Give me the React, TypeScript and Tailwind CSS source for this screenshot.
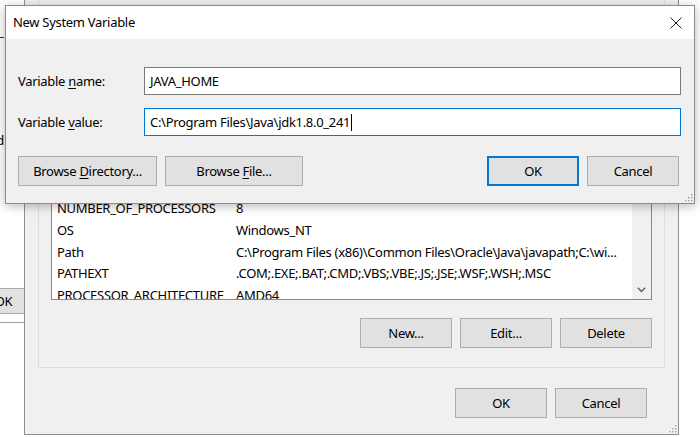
import React from "react";

function Btn({
  children,
  w,
  focused = false,
}: {
  children: React.ReactNode;
  w: string;
  focused?: boolean;
}) {
  return (
    <div
      className={
        "h-[30px] flex items-center justify-center bg-[#e1e1e1] " +
        w +
        (focused ? " border-2 border-[#0078d7]" : " border border-[#adadad]")
      }
    >
      {children}
    </div>
  );
}

function Grip() {
  return (
    <svg width="10" height="10" viewBox="0 0 10 10" className="absolute right-[1px] bottom-[1px]">
      {[
        [8, 2],
        [5, 5],
        [8, 5],
        [2, 8],
        [5, 8],
        [8, 8],
      ].map(([x, y]) => (
        <rect key={`${x}-${y}`} x={x} y={y} width="1.4" height="1.4" fill="#a0a0a0" />
      ))}
    </svg>
  );
}

const rows: [string, string][] = [
  ["asl.log", "Destination=file"],
  ["ComSpec", "C:\\WINDOWS\\system32\\cmd.exe"],
  ["DriverData", "C:\\Windows\\System32\\Drivers\\DriverData"],
  ["NUMBER_OF_PROCESSORS", "8"],
  ["OS", "Windows_NT"],
  ["Path", "C:\\Program Files (x86)\\Common Files\\Oracle\\Java\\javapath;C:\\wi..."],
  ["PATHEXT", ".COM;.EXE;.BAT;.CMD;.VBS;.VBE;.JS;.JSE;.WSF;.WSH;.MSC"],
  ["PROCESSOR_ARCHITECTURE", "AMD64"],
  ["PROCESSOR_IDENTIFIER", "Intel64 Family 6 Model 142 Stepping 10, GenuineIntel"],
];

export default function App() {
  return (
    <div className="relative w-[700px] h-[437px] overflow-hidden bg-white text-black font-['Noto_Sans',sans-serif] text-[13px] tracking-[-0.3px] leading-none">
      {/* Far-left background window */}
      <div className="absolute left-[-300px] top-[-10px] w-[400px] h-[333px] bg-white border border-[#a0a0a0] flex flex-col">
        <div className="flex justify-end pr-[95px] pt-[46px]">
          <div className="w-[4px] h-px bg-[#333]" />
        </div>
        <div className="flex justify-end pr-[95px] pt-[96px]">
          <span>Add</span>
        </div>
        <div className="flex-1" />
        <div className="flex justify-end pr-[58px] pb-[8px]">
          <div className="w-[75px] h-[26px] bg-[#e1e1e1] border border-[#adadad] flex items-center justify-center">
            OK
          </div>
        </div>
      </div>

      {/* Environment Variables window */}
      <div className="absolute left-[24px] top-[-200px] w-[655px] h-[635px] bg-[#f0f0f0] border border-[#8f8f8f] flex flex-col px-[13px] pb-[16px]">
        <div className="flex-1 border border-[#dcdcdc] flex flex-col justify-end px-[12px] pb-[19px]">
          <div className="h-[188px] border border-[#828790] bg-white flex overflow-hidden">
            <div className="flex-1 flex flex-col overflow-hidden">
              <div className="h-[20px] shrink-0 flex items-center border-b border-[#e5e5e5]">
                <span className="w-[184px] pl-[5px]">Variable</span>
                <span>Value</span>
              </div>
              {rows.map(([k, v]) => (
                <div key={k} className="h-[21.67px] shrink-0 flex items-center whitespace-nowrap">
                  <span className="w-[184px] shrink-0 pl-[5px]">{k}</span>
                  <span>{v}</span>
                </div>
              ))}
            </div>
            <div className="w-[19px] shrink-0 bg-[#f0f0f0] flex flex-col justify-end items-center pb-[6px]">
              <svg width="9" height="6" viewBox="0 0 9 6">
                <path d="M0.8 0.8 L4.5 4.5 L8.2 0.8" fill="none" stroke="#606060" strokeWidth="1.5" />
              </svg>
            </div>
          </div>
          <div className="mt-[18px] flex justify-end gap-[8px]">
            <Btn w="w-[92px]">New...</Btn>
            <Btn w="w-[92px]">Edit...</Btn>
            <Btn w="w-[92px]">Delete</Btn>
          </div>
        </div>
        <div className="mt-[20px] flex justify-end gap-[8px] pr-[18px]">
          <Btn w="w-[92px]">OK</Btn>
          <Btn w="w-[92px]">Cancel</Btn>
        </div>
        <Grip />
      </div>

      {/* New System Variable dialog */}
      <div className="absolute left-[5px] top-[5px] w-[690px] h-[199px] bg-[#f0f0f0] border border-[#8a8a8a] flex flex-col shadow-[0_2px_10px_rgba(0,0,0,0.28)]">
        <div className="h-[33px] shrink-0 bg-white flex items-center justify-between pl-[7px] pr-[12px]">
          <span>New System Variable</span>
          <svg width="12" height="12" viewBox="0 0 12 12">
            <path d="M0.5 0.5 L11.5 11.5 M11.5 0.5 L0.5 11.5" stroke="#202020" strokeWidth="1" />
          </svg>
        </div>
        <div className="flex flex-col pl-[12px] pr-[13px] pt-[28px]">
          <div className="flex items-center">
            <span className="w-[126px] shrink-0">
              Variable <span className="underline underline-offset-2">n</span>ame:
            </span>
            <div className="flex-1 h-[28px] bg-white border border-[#7a7a7a] flex items-center pl-[5px]">
              JAVA_HOME
            </div>
          </div>
          <div className="flex items-center mt-[13px]">
            <span className="w-[126px] shrink-0">
              Variable <span className="underline underline-offset-2">v</span>alue:
            </span>
            <div className="flex-1 h-[28px] bg-white border border-[#0078d7] flex items-center pl-[5px]">
              <span>C:\Program Files\Java\jdk1.8.0_241</span>
              <span className="w-px h-[17px] bg-black ml-[1px]" />
            </div>
          </div>
          <div className="flex items-center mt-[20px] pr-[2px]">
            <Btn w="w-[139px]">
              <span>
                Browse <span className="underline underline-offset-2">D</span>irectory...
              </span>
            </Btn>
            <div className="ml-[8px]">
              <Btn w="w-[138px]">
                <span>
                  Browse <span className="underline underline-offset-2">F</span>ile...
                </span>
              </Btn>
            </div>
            <div className="flex-1" />
            <Btn w="w-[92px]" focused>
              OK
            </Btn>
            <div className="ml-[8px]">
              <Btn w="w-[92px]">Cancel</Btn>
            </div>
          </div>
        </div>
        <Grip />
      </div>
    </div>
  );
}
